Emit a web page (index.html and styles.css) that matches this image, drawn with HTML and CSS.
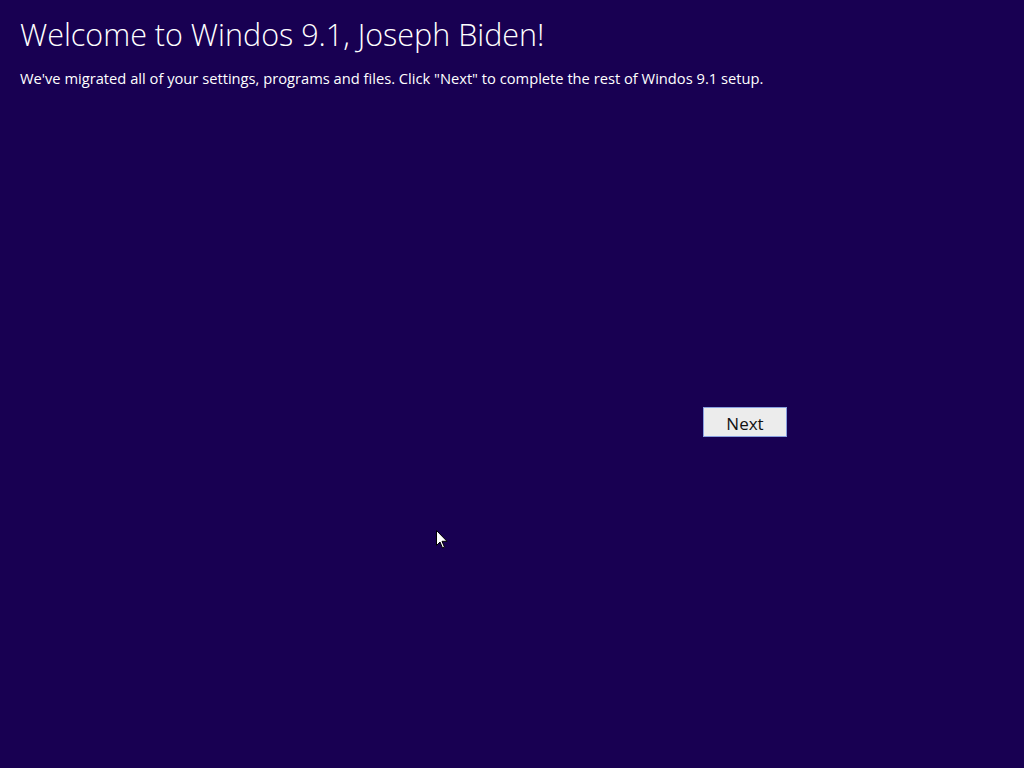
FILE: index.html
```html
<!DOCTYPE html>
<html lang="en">
<head>
  <meta charset="UTF-8">
  <title>Windos 9.1 setup</title>
  <link rel="stylesheet" href="styles.css">
</head>
<body>
  <div class="screen">
    <div class="header">
      <h1>Welcome to Windos 9.1, Joseph Biden!</h1>
      <p>We've migrated all of your settings, programs and files. Click "Next" to complete the rest of Windos 9.1 setup.</p>
    </div>
    <div class="actions">
      <button class="next-btn">Next</button>
    </div>
    <!-- mouse pointer -->
    <svg class="cursor" width="12" height="19" viewBox="0 0 12 19">
      <path d="M0.5 0.5 L0.5 15.5 L4 12 L6.5 18 L8.5 17.2 L6 11.3 L11 11.3 Z" fill="#fff" stroke="#000" stroke-width="1"/>
    </svg>
  </div>
</body>
</html>
```

FILE: styles.css
```css
body, html {
  margin: 0;
  height: 100%;
}

body {
  background-color: #180052;
  color: #fff;
  font-family: "Open Sans", "Noto Sans", sans-serif;
}

.screen {
  position: relative;
  height: 100%;
  padding: 0 20px;
  box-sizing: border-box;
}

.header h1 {
  margin: 0;
  padding-top: 13px;
  font-size: 30.5px;
  font-weight: 300;
  line-height: 42px;
}

.header p {
  margin: 0;
  padding-top: 13px;
  font-size: 14.7px;
  line-height: 20px;
}

.actions {
  display: flex;
  padding-top: 319px;
  padding-left: 683px;
}

.next-btn {
  width: 84px;
  height: 30px;
  padding: 2px 0 0;
  background-color: #ececec;
  border: 1px solid #8aa0e0;
  color: #111;
  font-family: "Open Sans", "Noto Sans", sans-serif;
  font-size: 17px;
}

.cursor {
  position: absolute;
  left: 436px;
  top: 530px;
}
```
